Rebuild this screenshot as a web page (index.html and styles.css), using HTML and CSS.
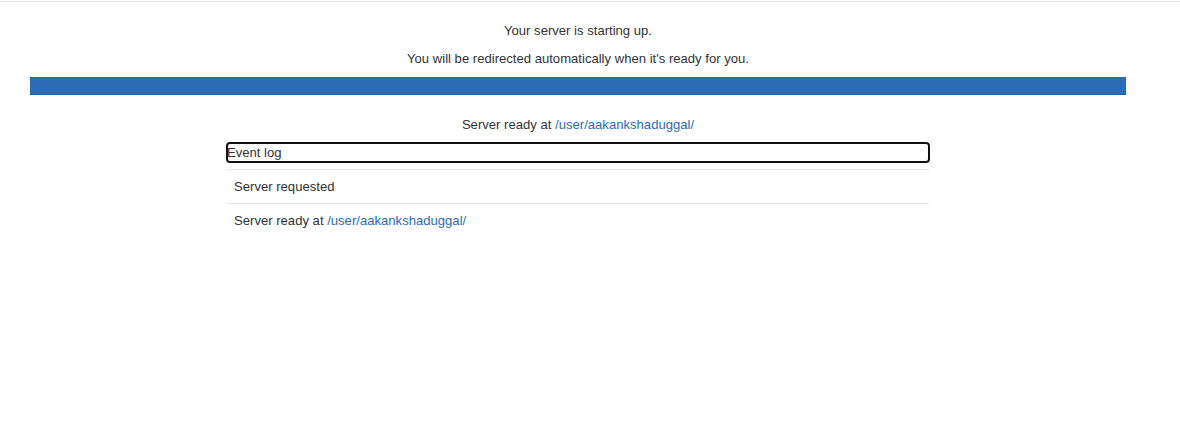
FILE: index.html
```html
<!DOCTYPE html>
<html>
<head>
<meta charset="utf-8">
<link rel="stylesheet" href="styles.css">
</head>
<body>
<div class="topline"></div>
<div class="page">
  <p class="msg first">Your server is starting up.</p>
  <p class="msg">You will be redirected automatically when it's ready for you.</p>
  <div class="progress"><div class="bar"></div></div>
  <p class="ready">Server ready at <a href="#">/user/aakankshaduggal/</a></p>
  <div class="events">
    <div class="summary">Event log</div>
    <div class="row">Server requested</div>
    <div class="row">Server ready at <a href="#">/user/aakankshaduggal/</a></div>
  </div>
</div>
</body>
</html>
```
FILE: styles.css
```css
html, body {
  margin: 0;
  padding: 0;
  background: #fff;
}
body {
  font-family: "Liberation Sans", Arial, sans-serif;
  font-size: 13.1px;
  line-height: 20px;
  color: #333;
}
a {
  color: #2c6db6;
  text-decoration: none;
}
.topline {
  margin-top: 1px;
  height: 1px;
  background: #e7e7e7;
}
.page {
  width: 1096px;
  padding: 0 30px;
}
.msg {
  margin: 0 0 8px;
  text-align: center;
}
.msg.first {
  margin-top: 19px;
}
.progress {
  margin-top: 1px;
  height: 18px;
  background: #f5f5f5;
}
.bar {
  height: 100%;
  width: 100%;
  background: #2b6cb7;
  box-shadow: inset 0 -1px 0 rgba(0,0,0,0.15);
}
.ready {
  margin: 20px 0 0;
  text-align: center;
}
.events {
  width: 702px;
  margin: 8px auto 0;
}
.summary {
  height: 19px;
  line-height: 19px;
  outline: 2px solid #111;
  outline-offset: -1px;
  border-radius: 3px;
  margin-bottom: 7px;
}
.row {
  border-top: 1px solid #e6e6e6;
  padding: 7px 7px 6px;
}
```
